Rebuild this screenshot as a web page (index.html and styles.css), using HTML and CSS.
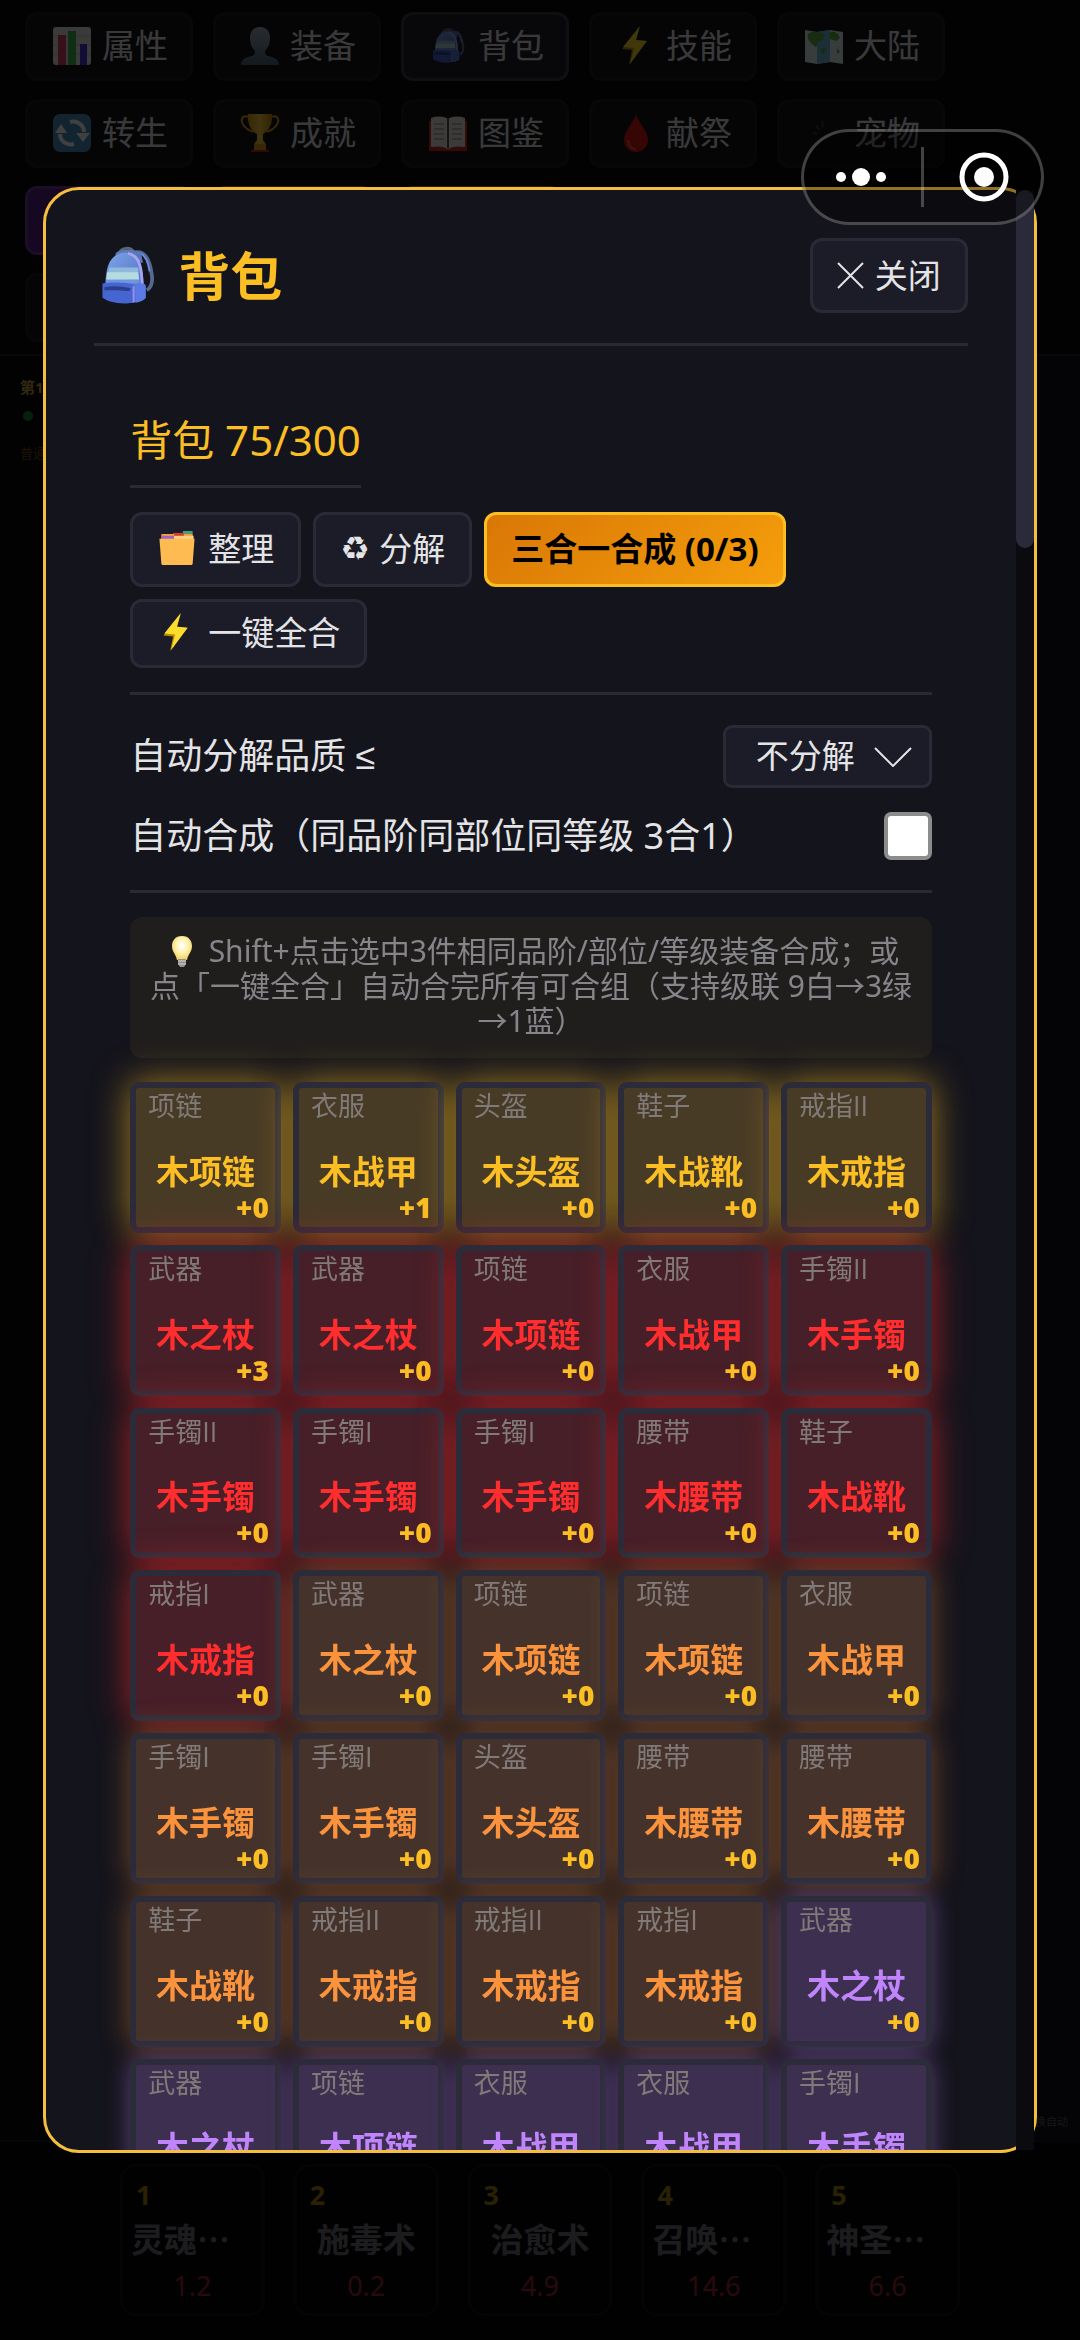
FILE: index.html
```html
<!DOCTYPE html>
<html lang="zh-CN">
  <head>
    <meta charset="UTF-8" />
    <meta name="viewport" content="width=device-width, initial-scale=1.0" />
    <title>背包</title>
    <link rel="stylesheet" href="styles.css">
  </head>
  <body>
    <svg class="sprites" aria-hidden="true">
      <defs>
        <linearGradient id="bag-body" x1="0" y1="0" x2="1" y2="1">
          <stop offset="0" stop-color="#7fa6e6" />
          <stop offset="1" stop-color="#4a66c4" />
        </linearGradient>
        <linearGradient id="head-fill" x1="0" y1="0" x2="0" y2="1">
          <stop offset="0" stop-color="#9fb2c4" />
          <stop offset="1" stop-color="#4f6478" />
        </linearGradient>
        <linearGradient id="cup-fill" x1="0" y1="0" x2="1" y2="0">
          <stop offset="0" stop-color="#e09a10" />
          <stop offset="0.5" stop-color="#ffcf40" />
          <stop offset="1" stop-color="#c98508" />
        </linearGradient>
        <radialGradient id="bulb-fill" cx="0.5" cy="0.4" r="0.6">
          <stop offset="0" stop-color="#ffffff" />
          <stop offset="0.5" stop-color="#fff3b0" />
          <stop offset="1" stop-color="#f0cf60" />
        </radialGradient>
      </defs>

      <symbol id="icon-bag" viewBox="-2 0 70 68">
        <path d="M42 9c10-2 15 8 17 22 2 10-1 16-5 18" fill="none" stroke="#56688f" stroke-width="4" />
        <path d="M42 9c9-1 13 8 15 20" fill="none" stroke="#6d8be0" stroke-width="2" />
        <path d="M25 10c0-6 14-8 15-1" fill="none" stroke="#5c6670" stroke-width="3" />
        <path d="M21 10c3-5 22-5 27 0l2 10-30-2z" fill="#5878b8" />
        <path d="M10 48c0-24 4-38 22-39 15 0 19 14 19 50-8 5-30 6-40-2z" fill="url(#bag-body)" />
        <path d="M34 10c12 2 16 14 15 46" fill="none" stroke="#a9a4f2" stroke-width="3" />
        <path d="M14 25h31v6H13z" fill="#8fb9dc" />
        <path d="M12 30h33l1 8H11z" fill="#b4dbe0" />
        <path d="M11 38h35v4H11z" fill="#6f94e0" />
        <path d="M7 42c9-2 26-1 33 1l-1 19c-10 2-24 1-32-5z" fill="#4566d2" />
        <path d="M9 46c9-2 19-1 28 1l-1 3c-8-1-20-1-27-1z" fill="#2c3f8c" />
        <path d="M42 44c4-3 9-3 11 0v13c-2 3-8 5-11 5z" fill="#5a7ae6" />
        <path d="M40 45v17" stroke="#9a8cf0" stroke-width="2" />
      </symbol>
      <symbol id="icon-chart" viewBox="0 0 40 40">
        <rect x="1" y="1" width="38" height="38" rx="3" fill="#e8e8ec" />
        <path d="M1 10h38M1 19h38M1 28h38" stroke="#c8c8cc" />
        <rect x="6" y="9" width="8" height="30" fill="#e0406a" />
        <rect x="16" y="5" width="8" height="34" fill="#3fb648" />
        <rect x="28" y="18" width="7" height="21" fill="#4038d0" />
      </symbol>
      <symbol id="icon-user" viewBox="0 0 40 40">
        <path d="M20 1c7 0 10 5 10 11s-2 10-5 13c0 4 2 5 7 6 5 2 7 4 7 8H1c0-4 2-6 7-8 5-1 7-2 7-6-3-3-5-7-5-13S13 1 20 1z" fill="url(#head-fill)" />
      </symbol>
      <symbol id="icon-bolt" viewBox="0 0 40 40">
        <path d="M23 1 6 23l10 1-3 15 17-24-10-1z" fill="#b88a00" />
        <path d="M24 0 7 21l11 1-4 16 17-23-11-1z" fill="#fedc2c" />
      </symbol>
      <symbol id="icon-map" viewBox="0 0 40 40">
        <path d="M1 4l12 2 13-2 13 2v32l-13-2-13 2-12-2z" fill="#d5f2ee" />
        <path d="M13 6l13-2v32l-13 2z" fill="#6fb6dc" />
        <path d="M4 8c5-4 12-2 17 1l-3 5-4 2-2 5-4-3c-3-3-5-6-4-10z" fill="#5fae3c" />
        <path d="M25 7c5-3 9 0 11 5l-4 3-6-2zM17 22l5 1-2 5-3-2zM33 22l3 4-3 2z" fill="#5fae3c" />
      </symbol>
      <symbol id="icon-refresh" viewBox="0 0 40 40">
        <rect x="1" y="1" width="38" height="38" rx="7" fill="#4b90c4" />
        <path d="M18 9c7-2 14 3 14 10M22 31c-7 2-14-3-14-10" fill="none" stroke="#fff" stroke-width="4" />
        <path d="M24 20h14l-7 9zM3 20h12L9 11z" fill="#fff" />
      </symbol>
      <symbol id="icon-cup" viewBox="0 0 40 40">
        <path d="M9 4C1 1 0 8 4 13c3 4 7 5 9 6M31 4c8-3 9 4 5 9-3 4-7 5-9 6" fill="none" stroke="#dfa020" stroke-width="2" />
        <path d="M8 1h24c1 11-4 18-9 20v6l3 4H14l3-4v-6C12 19 7 12 8 1z" fill="url(#cup-fill)" />
        <path d="M14 31h12v6H14z" fill="#d89a18" />
        <path d="M11 37h18v2H11z" fill="#c02818" />
      </symbol>
      <symbol id="icon-book" viewBox="0 0 40 40">
        <path d="M1 8h38v30H1z" fill="#c8281c" />
        <path d="M3 5c6-2 12-2 17 1 5-3 11-3 17-1v29c-6-1-12-1-17 2-5-3-11-3-17-2z" fill="#f0ece4" />
        <path d="M20 6v29" stroke="#5c5650" stroke-width="2" />
        <path d="M6 11h10M6 16h10M6 21h10M6 26h10M24 11h10M24 16h10M24 21h10M24 26h10" stroke="#8a857c" />
      </symbol>
      <symbol id="icon-blood" viewBox="0 0 40 40">
        <path d="M20 1c2 9 12 16 12 26a12 12 0 0 1-24 0C8 17 18 10 20 1z" fill="#d41a12" />
        <path d="M12 27c0 5 3 9 8 9" fill="none" stroke="#f0564a" stroke-width="2" />
      </symbol>
      <symbol id="icon-paw" viewBox="0 0 40 40">
        <path d="M12 12l3 5M18 8l1 6M9 19l4 2" stroke="#3a3a44" stroke-width="2" />
      </symbol>
      <symbol id="icon-folder" viewBox="0 0 40 40">
        <path d="M26 2h10v8H26z" fill="#4c9a84" />
        <path d="M16 4h11v6H16z" fill="#d0402c" />
        <path d="M4 5h13v6H4zM27 5h9v5h-9z" fill="#f0a040" />
        <path d="M4 7h13v5H4z" fill="#a264c0" />
        <path d="M17 7h20v5H17z" fill="#ffd080" />
        <path d="M2 10h36l-2 26-1 1H5l-1-1z" fill="#fdbb52" />
      </symbol>
      <symbol id="icon-bulb" viewBox="0 0 32 32">
        <path d="M16 1c7 0 10 5 10 10 0 6-4 8-5 14H11C10 19 6 17 6 11 6 6 9 1 16 1z" fill="url(#bulb-fill)" />
        <path d="M12 24h8v5l-2 3h-4l-2-3z" fill="#8f9290" />
        <path d="M12 26h8M12 29h8" stroke="#d6d6d0" />
      </symbol>
    </svg>

    <nav class="tabs">
      <button class="tab"><svg><use href="#icon-chart" /></svg>属性</button>
      <button class="tab"><svg><use href="#icon-user" /></svg>装备</button>
      <button class="tab active"><svg><use href="#icon-bag" /></svg>背包</button>
      <button class="tab"><svg><use href="#icon-bolt" /></svg>技能</button>
      <button class="tab"><svg><use href="#icon-map" /></svg>大陆</button>
      <button class="tab"><svg><use href="#icon-refresh" /></svg>转生</button>
      <button class="tab"><svg><use href="#icon-cup" /></svg>成就</button>
      <button class="tab"><svg><use href="#icon-book" /></svg>图鉴</button>
      <button class="tab"><svg><use href="#icon-blood" /></svg>献祭</button>
      <button class="tab"><svg><use href="#icon-paw" /></svg>宠物</button>
      <div class="tab tab-purple"></div>
      <div class="tab tab-orange"></div>
      <div class="tab tab-orange"></div>
      <div class="tab tab-blank"></div>
      <div class="tab tab-blank"></div>
      <div class="tab"></div>
    </nav>

    <main class="battle">
      <div class="stage">
        <b>第1</b>
        <i class="online"></i>
        <span>普通</span>
      </div>
      <div class="auto">切换自动</div>
    </main>

    <footer class="skills">
      <div class="skill"><b>1</b><strong class="long">灵魂…</strong><span>1.2</span></div>
      <div class="skill"><b>2</b><strong>施毒术</strong><span>0.2</span></div>
      <div class="skill"><b>3</b><strong>治愈术</strong><span>4.9</span></div>
      <div class="skill"><b>4</b><strong class="long">召唤…</strong><span>14.6</span></div>
      <div class="skill"><b>5</b><strong class="long">神圣…</strong><span>6.6</span></div>
    </footer>

    <div class="overlay">
      <div class="modal" role="dialog" aria-labelledby="modal-title">
        <div class="modal-body">
          <div class="modal-header">
            <h2 id="modal-title"><svg><use href="#icon-bag" /></svg>背包</h2>
            <button class="btn close">
              <svg viewBox="0 0 27 27"><path d="M1 1l25 25M26 1L1 26" /></svg>关闭
            </button>
          </div>

          <div class="bag">
            <h3>背包 75/300</h3>
            <div class="toolbar">
              <button class="btn"><svg><use href="#icon-folder" /></svg>整理</button>
              <button class="btn"><span class="recycle">♻</span>分解</button>
              <button class="btn primary">三合一合成 (0/3)</button>
              <button class="btn"><svg><use href="#icon-bolt" /></svg>一键全合</button>
            </div>

            <div class="settings">
              <div class="setting">
                <label for="quality">自动分解品质 <span class="lte">≤</span></label>
                <div class="select">
                  <select id="quality">
                    <option>不分解</option>
                  </select>
                  <svg viewBox="0 0 38 20"><path d="M1 1l18 18L37 1" /></svg>
                </div>
              </div>
              <div class="setting">
                <label for="merge">自动合成（同品阶同部位同等级 3合1）</label>
                <input type="checkbox" id="merge" />
              </div>
            </div>

            <p class="hint"><svg><use href="#icon-bulb" /></svg> Shift+点击选中3件相同品阶/部位/等级装备合成；或点「一键全合」自动合完所有可合组（支持级联 9白→3绿→1蓝）</p>

            <div class="grid" id="grid"></div>
          </div>
        </div>
        <div class="scrollbar"><div class="thumb"></div></div>
      </div>
    </div>

    <div class="capsule">
      <svg class="dots" viewBox="0 0 50 18"><circle cx="5" cy="9" r="5" /><circle cx="25" cy="9" r="9" /><circle cx="45" cy="9" r="5" /></svg>
      <i></i>
      <svg class="target" viewBox="0 0 50 50"><circle cx="25" cy="25" r="22" /><circle class="core" cx="25" cy="25" r="10" /></svg>
    </div>

    <script>
      // slot, name, quality, level
      const items = [
        ["项链", "木项链", "gold", 0],
        ["衣服", "木战甲", "gold", 1],
        ["头盔", "木头盔", "gold", 0],
        ["鞋子", "木战靴", "gold", 0],
        ["戒指II", "木戒指", "gold", 0],
        ["武器", "木之杖", "red", 3],
        ["武器", "木之杖", "red", 0],
        ["项链", "木项链", "red", 0],
        ["衣服", "木战甲", "red", 0],
        ["手镯II", "木手镯", "red", 0],
        ["手镯II", "木手镯", "red", 0],
        ["手镯I", "木手镯", "red", 0],
        ["手镯I", "木手镯", "red", 0],
        ["腰带", "木腰带", "red", 0],
        ["鞋子", "木战靴", "red", 0],
        ["戒指I", "木戒指", "red", 0],
        ["武器", "木之杖", "orange", 0],
        ["项链", "木项链", "orange", 0],
        ["项链", "木项链", "orange", 0],
        ["衣服", "木战甲", "orange", 0],
        ["手镯I", "木手镯", "orange", 0],
        ["手镯I", "木手镯", "orange", 0],
        ["头盔", "木头盔", "orange", 0],
        ["腰带", "木腰带", "orange", 0],
        ["腰带", "木腰带", "orange", 0],
        ["鞋子", "木战靴", "orange", 0],
        ["戒指II", "木戒指", "orange", 0],
        ["戒指II", "木戒指", "orange", 0],
        ["戒指I", "木戒指", "orange", 0],
        ["武器", "木之杖", "purple", 0],
        ["武器", "木之杖", "purple", 0],
        ["项链", "木项链", "purple", 0],
        ["衣服", "木战甲", "purple", 0],
        ["衣服", "木战甲", "purple", 0],
        ["手镯I", "木手镯", "purple", 0],
      ];

      document.getElementById("grid").innerHTML = items
        .map(
          ([slot, name, quality, level]) => `
            <div class="item ${quality}">
              <span class="slot">${slot}</span>
              <span class="name">${name}</span>
              <span class="level">+${level}</span>
            </div>`
        )
        .join("");
    </script>
  </body>
</html>
```
FILE: styles.css
```css
* {
  box-sizing: border-box;
}

body {
  margin: 0;
  min-height: 100vh;
  display: flex;
  flex-direction: column;
  overflow: hidden;
  background: #08080c;
  color: #e4e4e7;
  font-family: "Noto Sans", "Noto Sans CJK SC", sans-serif;
  font-size: 33px;
}

button,
select {
  font: inherit;
  color: inherit;
}

.sprites {
  position: absolute;
  width: 0;
  height: 0;
}

/* page behind the modal */
.tabs {
  display: flex;
  flex-wrap: wrap;
  gap: 18px 20px;
  padding: 12px 108px 12px 25px;
  border-bottom: 2px solid #20202a;
}

.tab {
  display: flex;
  align-items: center;
  gap: 10px;
  width: 168px;
  height: 69px;
  padding: 0 24px 2px;
  border: 3px solid #1e1e26;
  border-radius: 12px;
  background: #14141a;
  line-height: 39px;
  white-space: nowrap;
}

.tab svg,
.btn svg {
  flex: none;
  width: 40px;
  height: 40px;
}

.tab.active {
  background: #20202e;
  border-color: #3c3c4a;
}

.tab-purple {
  background: #581c87;
  border-color: #6b3a96;
}

.tab-orange {
  width: 161px;
  margin-right: 7px;
  background: #b45309;
  border-color: #c2700c;
}

.tab-blank {
  visibility: hidden;
}

.battle {
  flex: 1;
  display: flex;
  flex-direction: column;
  justify-content: space-between;
  padding: 20px 12px 6px 20px;
  background: linear-gradient(to right, #08080a 0%, #0a0c14 50%, #10121c 100%);
}

.stage {
  display: flex;
  flex-direction: column;
  gap: 8px;
  font-size: 15px;
  line-height: 22px;
  color: #b8860b;
}

.stage b {
  color: #c9a23a;
}

.stage span {
  margin-top: 8px;
  font-size: 13px;
  color: #7a4a10;
}

.online {
  width: 10px;
  height: 10px;
  margin: 5px 3px;
  border-radius: 50%;
  background: #15803d;
}

.auto {
  align-self: flex-end;
  font-size: 11px;
  line-height: 24px;
  color: #55555c;
}

.skills {
  display: flex;
  gap: 29px;
  padding: 22px 120px 24px;
  border-top: 2px solid #14141a;
  background: #050507;
}

.skill {
  flex: 1;
  max-width: 145px;
  height: 152px;
  display: flex;
  flex-direction: column;
  padding: 11px 8px;
  border: 3px solid #101014;
  border-radius: 15px;
  text-align: center;
  color: #72727a;
}

.skill b {
  padding-left: 5px;
  text-align: left;
  font-size: 27px;
  line-height: 33px;
  color: #a8820c;
}

.skill strong {
  font-family: "Noto Sans CJK SC", sans-serif;
  line-height: 54px;
}

.skill .long {
  text-align: left;
}

.skill span {
  font-size: 27px;
  line-height: 42px;
  color: #a02832;
}

/* modal */
.overlay {
  position: fixed;
  inset: 0;
  display: flex;
  align-items: center;
  justify-content: center;
  background: rgba(0, 0, 0, 0.75);
}

.modal {
  position: relative;
  width: 92%;
  height: 84%;
  border: 3px solid #f5be3c;
  border-radius: 36px;
  background: #14141c;
}

.modal-body {
  height: 100%;
  padding: 48px 66px 0 48px;
  border-radius: 33px;
  overflow: hidden;
}

.modal-header {
  display: flex;
  align-items: center;
  justify-content: space-between;
  padding-bottom: 30px;
  border-bottom: 3px solid #2a2a37;
}

h2 {
  display: flex;
  align-items: center;
  gap: 18px;
  margin: 0;
  font-size: 52px;
  line-height: 72px;
  color: #fbbf24;
}

h2 svg {
  width: 66px;
  height: 66px;
}

.btn {
  display: flex;
  align-items: center;
  gap: 11px;
  padding: 11px 24px 13px;
  border: 3px solid #2a2a37;
  border-radius: 12px;
  background: #1c1c28;
  line-height: 39px;
  white-space: nowrap;
}

.close {
  padding: 15px 24px;
}

.close svg {
  width: 27px;
  height: 27px;
  fill: none;
  stroke: #e4e4e7;
  stroke-width: 2;
}

.primary {
  border-color: #fbbf24;
  background: linear-gradient(135deg, #d97706, #f59e0b);
  color: #000;
  font-weight: bold;
}

.recycle {
  width: 28px;
  font-family: "DejaVu Sans", sans-serif;
  line-height: 45px;
}

.bag {
  padding: 64px 36px 0;
}

h3 {
  width: fit-content;
  margin: 0 0 24px;
  padding-bottom: 15px;
  border-bottom: 3px solid #2a2a37;
  font-size: 42px;
  font-weight: normal;
  line-height: 60px;
  color: #fbbf24;
}

.toolbar {
  display: flex;
  flex-wrap: wrap;
  gap: 12px;
  padding-bottom: 24px;
}

.toolbar .btn svg {
  height: 39px;
}

.settings {
  display: flex;
  flex-direction: column;
  gap: 24px;
  padding: 30px 0;
  border-top: 3px solid #2a2a37;
  border-bottom: 3px solid #2a2a37;
}

.setting {
  display: flex;
  align-items: center;
  justify-content: space-between;
  font-size: 36px;
  line-height: 48px;
}

.lte {
  font-family: "Liberation Sans", sans-serif;
}

.select {
  display: grid;
  align-items: center;
  font-size: 33px;
}

.select select {
  grid-area: 1 / 1;
  width: 209px;
  height: 63px;
  padding: 0 0 2px 30px;
  border: 3px solid #2a2a37;
  border-radius: 9px;
  background: #1c1c28;
  appearance: none;
}

.select svg {
  grid-area: 1 / 1;
  justify-self: end;
  width: 38px;
  height: 20px;
  margin-right: 20px;
  fill: none;
  stroke: #e4e4e7;
  stroke-width: 2;
  pointer-events: none;
}

.setting input {
  width: 48px;
  height: 48px;
  margin: 0;
  border: 4px solid #8c8c8c;
  border-radius: 7px;
  background: #fff;
  appearance: none;
}

.hint {
  margin: 24px 0;
  padding: 16px 18px 20px;
  border-radius: 12px;
  background: #201e1d;
  font-size: 30px;
  line-height: 35px;
  text-align: center;
  color: #85858a;
}

.hint svg {
  width: 38px;
  height: 32px;
  vertical-align: -5px;
}

.grid {
  display: grid;
  grid-template-columns: repeat(5, 1fr);
  gap: 12px;
}

.item {
  aspect-ratio: 1;
  display: flex;
  flex-direction: column;
  border: 6px solid #2c2b3a;
  border-radius: 9px;
}

.slot {
  padding-left: 12px;
  font-family: "Open Sans", "Noto Sans CJK SC", sans-serif;
  font-size: 27px;
  line-height: 36px;
  color: #807a78;
}

.name {
  margin: auto 0 0;
  text-align: center;
  font-weight: bold;
  line-height: 40px;
}

.level {
  padding: 0 6px 5px 0;
  text-align: right;
  font-size: 28px;
  font-weight: 900;
  line-height: 30px;
  color: #fbbf24;
}

.gold {
  background: #483b26;
  box-shadow: 0 0 36px rgba(251, 191, 36, 0.6);
}

.gold .name {
  color: #fbbf24;
}

.red {
  background: #471f28;
  box-shadow: 0 0 36px rgba(255, 45, 45, 0.6);
}

.red .name {
  color: #ff2d2d;
}

.orange {
  background: #45332b;
  box-shadow: 0 0 30px rgba(251, 146, 60, 0.4);
}

.orange .name {
  color: #fb923c;
}

.purple {
  background: #3d2f50;
  box-shadow: 0 0 24px rgba(192, 132, 252, 0.4);
}

.purple .name {
  color: #c084fc;
}

.scrollbar {
  position: absolute;
  top: 0;
  right: 0;
  bottom: 0;
  width: 18px;
  background: #0a0a0f;
}

.thumb {
  height: 358px;
  border-radius: 9px;
  background: #2a2a3a;
}

/* mini program capsule, floats over everything */
.capsule {
  position: fixed;
  top: 129px;
  right: 36px;
  display: flex;
  align-items: center;
  justify-content: space-between;
  width: 243px;
  height: 96px;
  padding: 0 32px;
  border: 3px solid rgba(255, 255, 255, 0.25);
  border-radius: 48px;
  background: rgba(0, 0, 0, 0.4);
}

.capsule i {
  width: 3px;
  height: 60px;
  background: rgba(255, 255, 255, 0.25);
}

.dots {
  width: 50px;
  height: 18px;
  fill: #fff;
}

.target {
  width: 50px;
  height: 50px;
  fill: none;
  stroke: #fff;
  stroke-width: 5;
}

.target .core {
  fill: #fff;
  stroke: none;
}
```
